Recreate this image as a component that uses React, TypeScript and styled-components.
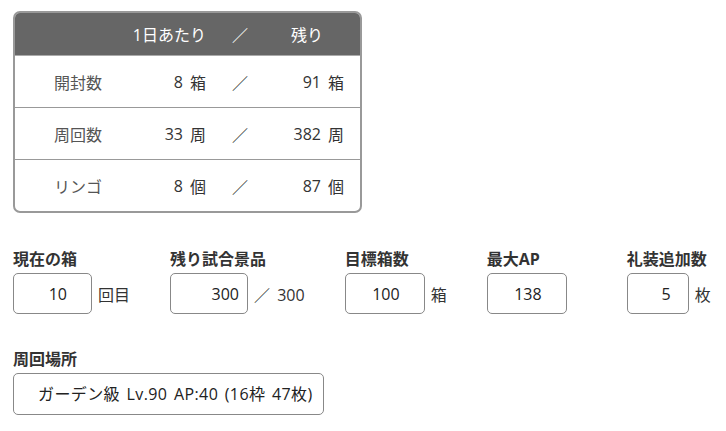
import React from "react";
import styled, { createGlobalStyle } from "styled-components";

const Global = createGlobalStyle`
  html, body { margin: 0; padding: 0; background: #fff; }
  body {
    font-family: "Open Sans", "Noto Sans CJK JP", sans-serif;
    color: #333;
    font-size: 16px;
  }
  * { box-sizing: border-box; }
`;

const Page = styled.div`
  padding: 11px 0 0 13px;
`;

const Table = styled.div`
  width: 349px;
  border: 2px solid #999;
  border-radius: 7px;
  overflow: hidden;
  display: grid;
  grid-template-columns: 126px 75px 48px 96px;
`;

const HeadCell = styled.div<{ $align: string; $pr?: number }>`
  height: 43px;
  background: #666;
  color: #fff;
  display: flex;
  align-items: center;
  justify-content: ${(p) => p.$align};
  padding-right: ${(p) => p.$pr ?? 0}px;
  border-bottom: 1px solid #aaa;
  font-size: 16px;
  white-space: nowrap;
`;

const Cell = styled.div<{ $align: string; $pr?: number; $last?: boolean; $label?: boolean }>`
  height: ${(p) => (p.$last ? 51 : 52)}px;
  display: flex;
  align-items: center;
  justify-content: ${(p) => p.$align};
  gap: 7px;
  padding-right: ${(p) => p.$pr ?? 0}px;
  border-bottom: ${(p) => (p.$last ? "none" : "1px solid #999")};
  color: ${(p) => (p.$label ? "#555" : "#333")};
  white-space: nowrap;
`;

const FormRow = styled.div`
  display: flex;
  gap: 40px;
  margin-top: 36px;
`;

const Field = styled.div`
  display: flex;
  flex-direction: column;
`;

const Label = styled.div`
  font-weight: bold;
  font-size: 16px;
  line-height: 20px;
  height: 20px;
  margin-bottom: 4px;
  color: #333;
  white-space: nowrap;
`;

const InputLine = styled.div`
  display: flex;
  align-items: center;
`;

const NumInput = styled.input<{ $w: number; $pr: number }>`
  width: ${(p) => p.$w}px;
  height: 41px;
  border: 1px solid #888;
  border-radius: 5px;
  font-family: inherit;
  font-size: 16px;
  color: #222;
  text-align: right;
  padding: 0 ${(p) => p.$pr}px 0 4px;
  background: #fff;
  outline: none;
`;

const Unit = styled.span<{ $w?: number }>`
  margin-left: 6px;
  font-size: 16px;
  color: #333;
  white-space: pre;
  word-spacing: 3px;
  min-width: ${(p) => p.$w ?? 0}px;
`;

const Section = styled.div`
  margin-top: 35px;
`;

const Select = styled.select`
  appearance: none;
  -webkit-appearance: none;
  width: 311px;
  height: 42px;
  border: 1px solid #888;
  border-radius: 5px;
  background: #fff;
  font-family: inherit;
  font-size: 16px;
  word-spacing: 2px;
  letter-spacing: 0.4px;
  color: #222;
  padding: 0 8px 0 24px;
  outline: none;
`;

const rows = [
  { label: "開封数", per: "8", rest: "91", unit: "箱" },
  { label: "周回数", per: "33", rest: "382", unit: "周" },
  { label: "リンゴ", per: "8", rest: "87", unit: "個" },
];

const fields = [
  { label: "現在の箱", value: "10", w: 79, pr: 24, unit: "回目" },
  { label: "残り試合景品", value: "300", w: 78, pr: 8, unit: "／ 300", uw: 50 },
  { label: "目標箱数", value: "100", w: 80, pr: 24, unit: "箱" },
  { label: "最大AP", value: "138", w: 80, pr: 24, unit: "", uw: 14 },
  { label: "礼装追加数", value: "5", w: 62, pr: 17, unit: "枚" },
];

export default function App() {
  return (
    <Page>
      <Global />
      <Table>
        <HeadCell $align="center" />
        <HeadCell $align="flex-end" $pr={10}>1日あたり</HeadCell>
        <HeadCell $align="center">／</HeadCell>
        <HeadCell $align="flex-end" $pr={37}>残り</HeadCell>
        {rows.map((r, i) => {
          const last = i === rows.length - 1;
          return (
            <React.Fragment key={r.label}>
              <Cell $align="center" $last={last} $label>{r.label}</Cell>
              <Cell $align="flex-end" $pr={10} $last={last}>
                <span>{r.per}</span>
                <span>{r.unit}</span>
              </Cell>
              <Cell $align="center" $last={last}>／</Cell>
              <Cell $align="flex-end" $pr={16} $last={last}>
                <span>{r.rest}</span>
                <span>{r.unit}</span>
              </Cell>
            </React.Fragment>
          );
        })}
      </Table>
      <FormRow>
        {fields.map((f) => (
          <Field key={f.label}>
            <Label>{f.label}</Label>
            <InputLine>
              <NumInput $w={f.w} $pr={f.pr} defaultValue={f.value} />
              {(f.unit || f.uw) && <Unit $w={f.uw}>{f.unit}</Unit>}
            </InputLine>
          </Field>
        ))}
      </FormRow>
      <Section>
        <Label>周回場所</Label>
        <Select defaultValue="garden">
          <option value="garden">ガーデン級 Lv.90 AP:40 (16枠 47枚)</option>
        </Select>
      </Section>
    </Page>
  );
}
